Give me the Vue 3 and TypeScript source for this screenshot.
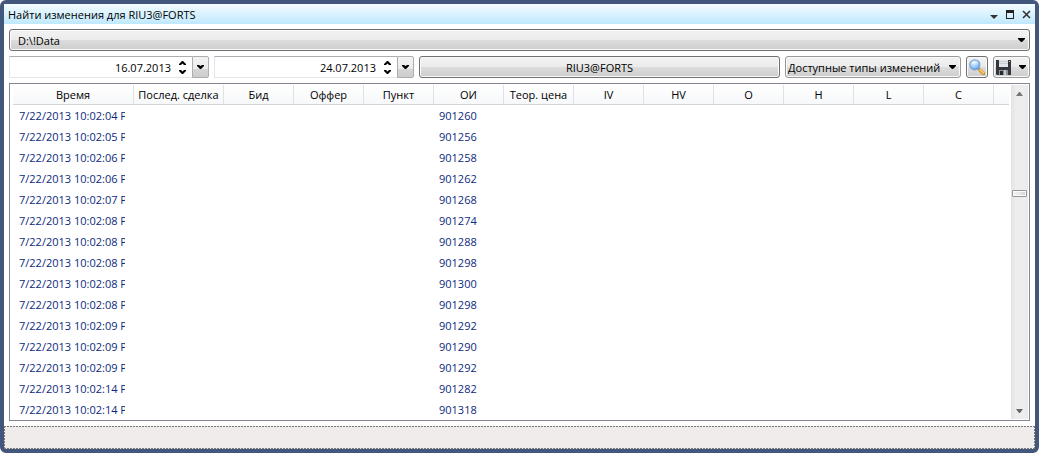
<script setup lang="ts">
import { ref } from 'vue'

interface Column {
  title: string
  width?: number
}

const instrument = 'RIU3@FORTS'
const folder = ref('D:\\!Data')
const changeType = ref('Доступные типы изменений')

const dates = ref([
  { label: 'Дата начала', value: '16.07.2013' },
  { label: 'Дата окончания', value: '24.07.2013' },
])

const columns: Column[] = [
  { title: 'Время', width: 121 },
  { title: 'Послед. сделка', width: 90 },
  { title: 'Бид', width: 70 },
  { title: 'Оффер', width: 70 },
  { title: 'Пункт', width: 70 },
  { title: 'ОИ', width: 70 },
  { title: 'Теор. цена', width: 70 },
  { title: 'IV', width: 70 },
  { title: 'HV', width: 70 },
  { title: 'O', width: 70 },
  { title: 'H', width: 70 },
  { title: 'L', width: 70 },
  { title: 'C', width: 70 },
  { title: '' },
]

const openInterestColumn = 5

const rows: [string, number][] = [
  ['10:02:04', 901260],
  ['10:02:05', 901256],
  ['10:02:06', 901258],
  ['10:02:06', 901262],
  ['10:02:07', 901268],
  ['10:02:08', 901274],
  ['10:02:08', 901288],
  ['10:02:08', 901298],
  ['10:02:08', 901300],
  ['10:02:08', 901298],
  ['10:02:09', 901292],
  ['10:02:09', 901290],
  ['10:02:09', 901292],
  ['10:02:14', 901282],
  ['10:02:14', 901318],
]

function cellText(row: [string, number], index: number): string {
  if (index === 0) return `7/22/2013 ${row[0]} P`
  return index === openInterestColumn ? String(row[1]) : ''
}
</script>

<template>
  <div class="window">
    <header class="titlebar">
      <h1>Найти изменения для {{ instrument }}</h1>
      <button class="caption" type="button" aria-label="Меню окна">
        <svg width="8" height="12"><path d="M0 6h8l-4 4z" fill="#333" /></svg>
      </button>
      <button class="caption" type="button" aria-label="Развернуть">
        <svg width="8" height="12"><path d="M0 1h8v9H0zM1 4v5h6V4z" fill="#222" fill-rule="evenodd" /></svg>
      </button>
      <button class="caption" type="button" aria-label="Закрыть">
        <svg width="9" height="12"><path d="M1 2l7 7M8 2l-7 7" stroke="#333" stroke-width="1.6" /></svg>
      </button>
    </header>

    <main class="body">
      <div class="combo folder">
        <select v-model="folder" aria-label="Папка с данными">
          <option>D:\!Data</option>
        </select>
        <svg class="arrow" width="7" height="4"><path d="M0 0h7v1L4 4H3L0 1z" /></svg>
      </div>

      <div class="toolbar">
        <div v-for="date in dates" :key="date.label" class="date">
          <input v-model="date.value" type="text" :aria-label="date.label" />
          <div class="spin">
            <button type="button" aria-label="Увеличить">
              <svg width="7" height="4"><path d="M3 0h1l3 3v1H5L3.500 2.500 2 4H0V3z" /></svg>
            </button>
            <button type="button" aria-label="Уменьшить">
              <svg width="7" height="4"><path d="M3 4h1l3-3V0H5L3.500 1.500 2 0H0v1z" /></svg>
            </button>
          </div>
          <button class="drop" type="button" aria-label="Открыть календарь">
            <svg width="7" height="4"><path d="M0 0h2l1.500 1L5 0h2v1L4 4H3L0 1z" /></svg>
          </button>
        </div>

        <button class="button instrument" type="button">{{ instrument }}</button>

        <div class="combo types">
          <select v-model="changeType" aria-label="Типы изменений">
            <option>Доступные типы изменений</option>
          </select>
          <svg class="arrow" width="7" height="4"><path d="M0 0h7v1L4 4H3L0 1z" /></svg>
        </div>

        <button class="button search" type="button" aria-label="Найти">
          <svg width="16" height="16" viewBox="0 0 16 16">
            <defs>
              <radialGradient id="lens" cx="0.4" cy="0.3" r="0.75">
                <stop offset="0" stop-color="#e4f3ff" />
                <stop offset="0.55" stop-color="#9ccdfa" />
                <stop offset="1" stop-color="#4f93e6" />
              </radialGradient>
            </defs>
            <path d="M9 9l2 2" stroke="#777f8c" stroke-width="2" />
            <path d="M11 11l3.500 3.500" stroke="#c58a2a" stroke-width="3.200" stroke-linecap="round" />
            <path d="M11.200 10.800l3.200 3.200" stroke="#fbcb5a" stroke-width="2" stroke-linecap="round" />
            <circle cx="5.800" cy="5.800" r="5.100" fill="url(#lens)" stroke="#7f9fd0" stroke-width="1.100" />
            <path d="M2.200 5.500a3.700 3.700 0 0 1 7-1c-2-.3-5-.3-7 1z" fill="#fff" opacity="0.600" />
          </svg>
        </button>

        <button class="button save" type="button" aria-label="Сохранить">
          <svg width="15" height="15" viewBox="0 0 15 15">
            <path d="M0 0h15v15H1l-1-1z" fill="#34383d" />
            <path d="M3 0h9v7H3z" fill="#e4e7ea" />
            <path d="M3 1h9v1H3zM3 3h9v1H3z" fill="#c9ced3" />
            <path d="M3 10h9v5H3z" fill="#8f9397" />
            <path d="M4 11h3v4H4z" fill="#25282c" />
            <path d="M8 10h2v5H8z" fill="#c4c7ca" />
            <path d="M13 1h1v1h-1z" fill="#ccc" />
          </svg>
          <svg width="7" height="4"><path d="M0 0h7v1L4 4H3L0 1z" /></svg>
        </button>
      </div>

      <section class="list">
        <div class="viewport">
          <table>
            <colgroup>
              <col v-for="(column, i) in columns" :key="i" :style="column.width ? { width: column.width + 'px' } : undefined" />
            </colgroup>
            <thead>
              <tr>
                <th v-for="(column, i) in columns" :key="i" scope="col">{{ column.title }}</th>
              </tr>
            </thead>
            <tbody>
              <tr v-for="(row, r) in rows" :key="r">
                <td v-for="(column, i) in columns" :key="i"><div class="cell">{{ cellText(row, i) }}</div></td>
              </tr>
            </tbody>
          </table>
        </div>
        <div class="scrollbar">
          <button type="button" aria-label="Прокрутить вверх">
            <svg width="7" height="4"><path d="M3 0h1l3 4H0z" fill="#777" /></svg>
          </button>
          <div class="before"></div>
          <div class="thumb"></div>
          <div class="after"></div>
          <button type="button" aria-label="Прокрутить вниз">
            <svg width="7" height="4"><path d="M0 0h7L4 4H3z" fill="#666" /></svg>
          </button>
        </div>
      </section>
    </main>

    <footer class="status"></footer>
  </div>
</template>

<style>
body {
  background: #fff;
}
</style>

<style scoped>
* {
  box-sizing: border-box;
}

.window {
  display: flex;
  flex-direction: column;
  height: 100vh;
  min-height: 240px;
  border: 4px solid #43567c;
  border-radius: 6px;
  background: #43567c;
  color: #000;
  font: 11px/16px "Open Sans", "Noto Sans", sans-serif;
}

button,
input,
select {
  margin: 0;
  padding: 0;
  border: 0;
  background: none;
  color: inherit;
  font: inherit;
}

svg {
  display: block;
  flex: none;
}

.titlebar {
  display: flex;
  flex: none;
  align-items: center;
  gap: 8px;
  height: 20px;
  padding: 1px 4px 0;
  background: linear-gradient(#f4fcff, #bfe8fd);
}

h1 {
  flex: 1;
  margin: 0;
  font: inherit;
}

.body {
  display: flex;
  flex: 1;
  flex-direction: column;
  gap: 5px;
  min-height: 0;
  padding: 5px;
  background: #fff;
}

.combo,
.button {
  height: 22px;
  border: 1px solid #707070;
  border-radius: 3px;
  background: linear-gradient(#f3f3f3, #ebebeb 50%, #dddddd 50%, #cdcdcd);
  box-shadow: inset 0 0 0 1px #fafafa;
}

.combo {
  display: grid;
  flex: none;
  align-items: center;
}

.combo > * {
  grid-area: 1 / 1;
}

.combo select {
  width: 100%;
  height: 20px;
  padding-top: 2px;
  appearance: none;
}

.combo .arrow {
  justify-self: end;
  margin-right: 4px;
  pointer-events: none;
}

.folder select {
  padding-left: 8px;
}

.types {
  width: 176px;
  border-color: #999;
}

.types select {
  padding-left: 2px;
}

.toolbar {
  display: flex;
  flex: none;
  gap: 5px;
}

.date {
  display: flex;
  width: 200px;
  height: 22px;
}

.date input {
  flex: 1;
  min-width: 0;
  padding: 1px 8px 0 0;
  border: 1px solid #e2e6ec;
  border-top-color: #abadb3;
  border-right: 0;
  text-align: right;
}

.spin {
  display: flex;
  flex-direction: column;
  justify-content: center;
  gap: 5px;
  width: 13px;
  border-top: 1px solid #abadb3;
  border-bottom: 1px solid #e2e6ec;
}

.spin button {
  width: 7px;
  height: 4px;
}

.drop {
  display: flex;
  align-items: center;
  justify-content: center;
  width: 17px;
  border: 1px solid #abadb3;
  border-radius: 0 2px 2px 0;
  background: linear-gradient(#f3f3f3, #ebebeb 60%, #d5d5d5 60%, #cdcdcd);
}

.instrument {
  flex: 1;
  padding-top: 1px;
}

.search {
  display: flex;
  align-items: center;
  justify-content: center;
  width: 22px;
}

.save {
  display: flex;
  align-items: center;
  justify-content: space-between;
  width: 37px;
  padding: 0 3px 0 2px;
  border-color: #999;
}

.list {
  display: flex;
  flex: 1;
  gap: 2px;
  min-height: 0;
  padding: 1px;
  border: 1px solid #828790;
}

.viewport {
  flex: 1;
  min-width: 0;
  margin-left: 2px;
  overflow: hidden;
}

table {
  width: 100%;
  border-collapse: separate;
  border-spacing: 0;
  table-layout: fixed;
}

th {
  height: 20px;
  padding: 0;
  border-right: 1px solid #dfe1e4;
  border-bottom: 1px solid #d5d5d5;
  background: linear-gradient(#fff, #f7f8fa);
  font-weight: normal;
  white-space: nowrap;
}

th:last-child {
  border-right: 0;
}

td {
  height: 21px;
  padding: 0 6px;
  color: #0c2a7c;
}

td:not(:first-child) {
  padding-left: 5px;
}

td:first-child {
  padding-right: 9px;
}

.cell {
  overflow: hidden;
  white-space: nowrap;
}

.scrollbar {
  display: flex;
  flex: none;
  flex-direction: column;
  align-items: center;
  width: 17px;
  background: linear-gradient(90deg, #e3e3e3, #ededed 30%, #eee 80%, #e8e8e8);
}

.scrollbar button {
  display: flex;
  align-items: center;
  justify-content: center;
  width: 17px;
  height: 17px;
}

.before {
  flex: 30;
}

.after {
  flex: 70;
}

.thumb {
  width: 15px;
  height: 7px;
  border: 1px solid #979797;
  border-radius: 1px;
  background: linear-gradient(90deg, #f5f5f5, #e9e9e9 50%, #cfcfcf);
  box-shadow: inset 0 0 0 1px #fafafa;
}

.status {
  flex: none;
  height: 23px;
  background:
    repeating-linear-gradient(90deg, #777 0 2px, #f0eceb 2px 3px) top / 100% 1px no-repeat,
    repeating-linear-gradient(90deg, #777 0 2px, #f0eceb 2px 3px) bottom / 100% 1px no-repeat,
    repeating-linear-gradient(#777 0 2px, #f0eceb 2px 3px) left / 1px 100% no-repeat,
    repeating-linear-gradient(#777 0 2px, #f0eceb 2px 3px) right / 1px 100% no-repeat,
    #f0eceb;
}
</style>
